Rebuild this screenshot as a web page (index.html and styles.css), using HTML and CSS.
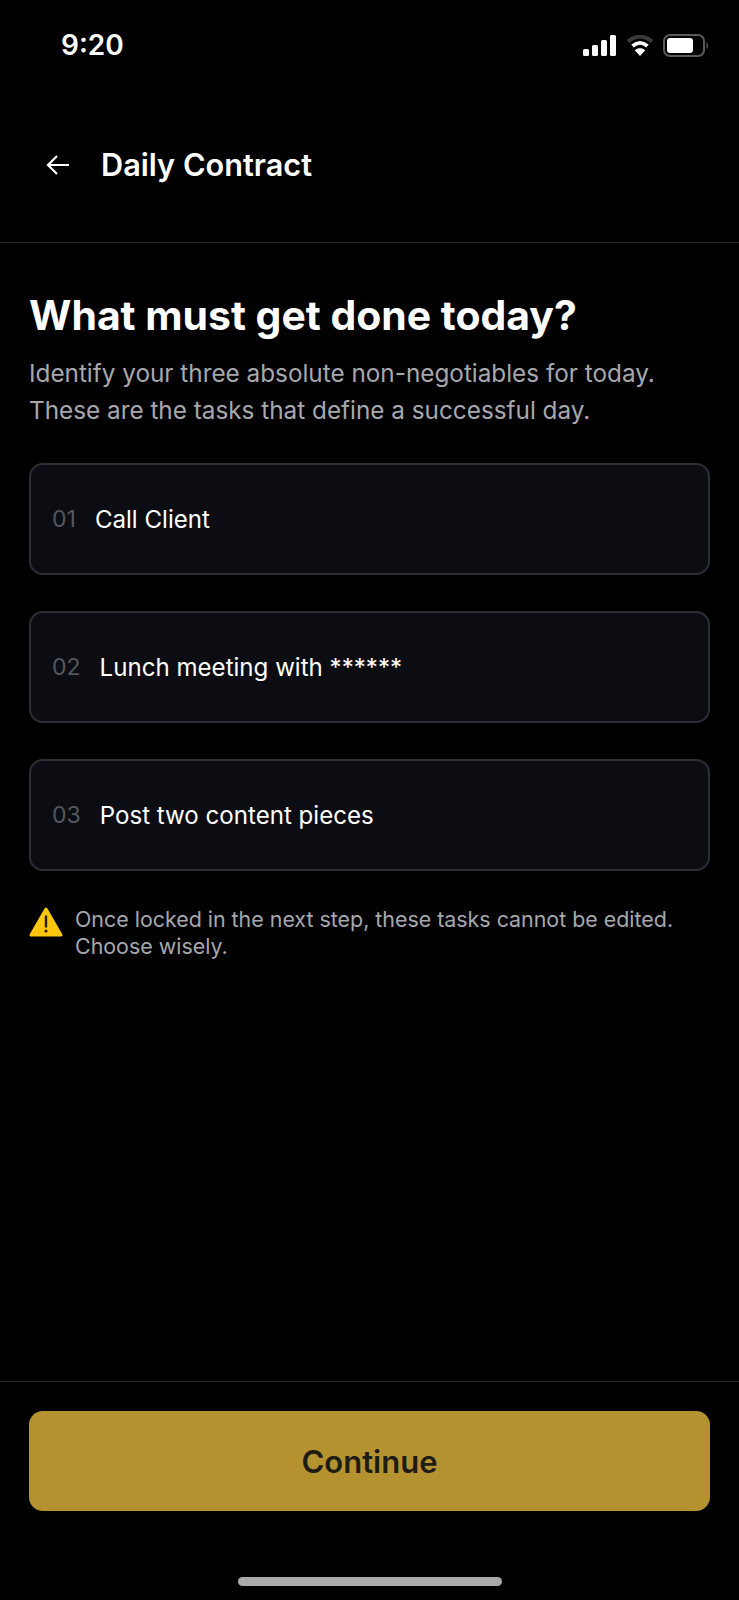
FILE: index.html
```html
<!DOCTYPE html>
<html lang="en">

<head>
    <meta charset="UTF-8">
    <meta name="viewport" content="width=device-width, initial-scale=1.0">
    <title>Daily Contract</title>
    <link rel="stylesheet" href="styles.css">
</head>

<body>
    <div class="screen">
        <div class="status-bar">
            <span class="time">9:20</span>
            <div class="status-icons">
                <svg width="34" height="21" viewBox="0 0 34 21">
                    <rect x="0" y="14" width="6" height="7" rx="1.5" fill="#fff"/>
                    <rect x="9" y="10" width="6" height="11" rx="1.5" fill="#fff"/>
                    <rect x="18" y="5" width="6" height="16" rx="1.5" fill="#fff"/>
                    <rect x="27" y="0" width="6" height="21" rx="1.5" fill="#fff"/>
                </svg>
                <svg width="28" height="21" viewBox="0 0 28 21">
                    <path d="M2 6.5C9.5 0 18.5 0 26 6.5" fill="none" stroke="#3a3a3a" stroke-width="4"/>
                    <path d="M6.5 11C11.5 6.8 16.5 6.8 21.5 11" fill="none" stroke="#fff" stroke-width="3.6"/>
                    <path d="M14 21L8.8 15.2C12 12.6 16 12.6 19.2 15.2Z" fill="#fff"/>
                </svg>
                <svg width="46" height="23" viewBox="0 0 46 23">
                    <rect x="1" y="1" width="40" height="21" rx="6" fill="none" stroke="#5a5a5a" stroke-width="2"/>
                    <rect x="4" y="4" width="26" height="15" rx="3" fill="#fff"/>
                    <path d="M43.5 8C45.5 9 45.5 14 43.5 15Z" fill="#5a5a5a"/>
                </svg>
            </div>
        </div>

        <header class="top-bar">
            <svg class="back" width="26" height="26" viewBox="0 0 26 26">
                <path d="M24 13H3M12 4L3 13L12 22" fill="none" stroke="#fff" stroke-width="2.2"/>
            </svg>
            <h1>Daily Contract</h1>
        </header>

        <main class="content">
            <h2>What must get done today?</h2>
            <p class="lead">Identify your three absolute non-negotiables for today.<br>These are the tasks that define a successful day.</p>

            <div class="tasks">
                <div class="task"><span class="num">01</span><span>Call Client</span></div>
                <div class="task"><span class="num">02</span><span>Lunch meeting with ******</span></div>
                <div class="task"><span class="num">03</span><span>Post two content pieces</span></div>
            </div>

            <div class="warning">
                <svg width="34" height="30" viewBox="0 0 34 30">
                    <path d="M17 2L32 28H2Z" fill="#fdc70f" stroke="#fdc70f" stroke-width="3" stroke-linejoin="round"/>
                    <path d="M17 9.5V19.5" stroke="#2a2000" stroke-width="2.4" stroke-linecap="round"/>
                    <circle cx="17" cy="24" r="1.6" fill="#2a2000"/>
                </svg>
                <p>Once locked in the next step, these tasks cannot be edited.<br>Choose wisely.</p>
            </div>
        </main>

        <footer class="bottom">
            <button class="continue" type="button">Continue</button>
            <div class="home-bar"></div>
        </footer>
    </div>
</body>

</html>
```

FILE: styles.css
```css
body {
    margin: 0;
    background-color: #000;
    font-family: Inter, 'Liberation Sans', sans-serif;
    color: white;
}

.screen {
    display: flex;
    flex-direction: column;
    height: 1600px;
    overflow: hidden;
}

.status-bar {
    display: flex;
    justify-content: space-between;
    align-items: center;
    height: 42px;
    padding: 24px 30px 0 61px;
}

.time {
    font-size: 28px;
    font-weight: 600;
}

.status-icons {
    display: flex;
    align-items: center;
    gap: 9px;
}

.top-bar {
    display: flex;
    align-items: center;
    height: 155px;
    padding: 21px 0 0 45px;
    border-bottom: 1px solid #2a2a2c;
}

.top-bar h1 {
    margin: 0 0 0 30px;
    font-size: 30.7px;
    font-weight: 600;
}

.back {
    flex: none;
}

.content {
    flex: 1;
    padding: 0 29px;
}

.content h2 {
    margin: 45px 0 0;
    font-size: 40.9px;
    line-height: 54px;
    font-weight: 700;
}

.lead {
    margin: 13px 0 0;
    font-size: 24.3px;
    line-height: 37px;
    color: #a6a8ad;
}

.tasks {
    display: flex;
    flex-direction: column;
    gap: 36px;
    margin-top: 34px;
}

.task {
    display: flex;
    align-items: center;
    gap: 19px;
    height: 112px;
    box-sizing: border-box;
    padding: 0 21px;
    background-color: #0c0d12;
    border: 2px solid #2c2e35;
    border-radius: 14px;
    font-size: 24.1px;
}

.num {
    font-size: 23px;
    color: #55585e;
}

.warning {
    display: flex;
    gap: 12px;
    margin-top: 34px;
    font-size: 21.4px;
    line-height: 27px;
    color: #a6a8ad;
}

.warning p {
    margin: 1px 0 0;
}

.warning svg {
    flex: none;
    margin-top: 2px;
}

.bottom {
    border-top: 1px solid #2a2a2c;
    padding: 29px 29px 0;
    height: 219px;
    box-sizing: border-box;
    display: flex;
    flex-direction: column;
    align-items: center;
}

.continue {
    width: 100%;
    height: 100px;
    flex: none;
    border: none;
    border-radius: 14px;
    background-color: #b59230;
    font-family: inherit;
    font-size: 31px;
    font-weight: 600;
    color: #1f1c14;
}

.home-bar {
    width: 264px;
    height: 9px;
    flex: none;
    margin-top: 66px;
    border-radius: 5px;
    background-color: #aaa;
}
```
